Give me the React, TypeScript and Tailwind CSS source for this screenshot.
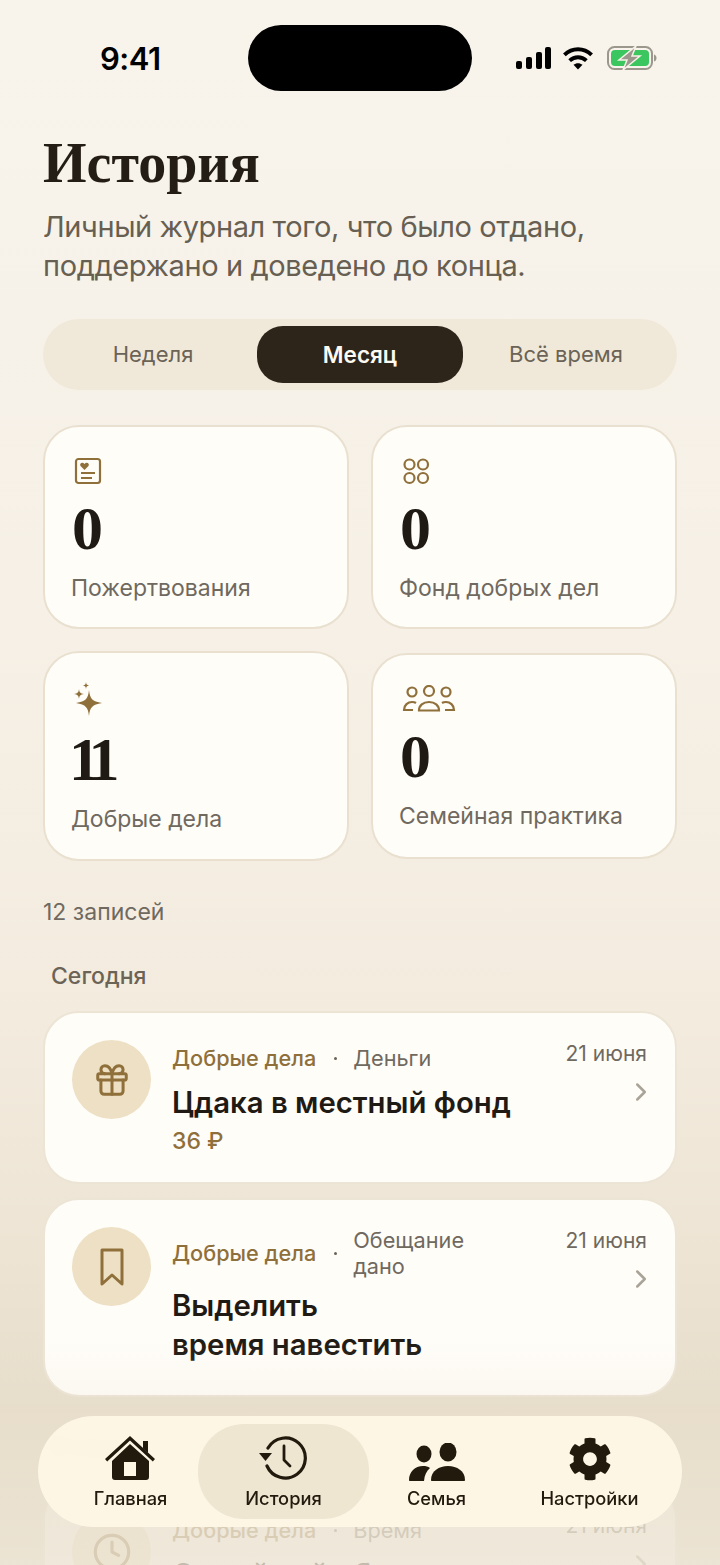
import { ChevronRight, Gift, Clock } from "lucide-react";
import { FaCog } from "react-icons/fa";

const sans = "font-['Inter','Noto_Sans',sans-serif]";
const serif = "font-['Liberation_Serif',serif]";

function StatusBar() {
  return (
    <div className="flex h-[91px] items-end">
      <div className="flex h-[66px] w-[248px] items-center pl-[100px]">
        <span className="text-[31px] font-semibold leading-none tracking-[-0.5px] text-black">9:41</span>
      </div>
      <div className="h-[66px] w-[224px] rounded-full bg-black" />
      <div className="flex h-[66px] items-center gap-[10px] pl-[44px]">
        <svg width="36" height="22" viewBox="0 0 36 22" fill="black">
          <rect x="0" y="14" width="6" height="8" rx="2" />
          <rect x="10" y="10" width="6" height="12" rx="2" />
          <rect x="20" y="5" width="6" height="17" rx="2" />
          <rect x="29" y="0" width="6" height="22" rx="2" />
        </svg>
        <svg width="32" height="23" viewBox="0 0 30 22" fill="none" stroke="black" strokeWidth="3.800">
          <path d="M2 7.500C9.500 .5 20.500 .5 28 7.500" />
          <path d="M7 13c4.700-4.300 11.300-4.300 16 0" />
          <path d="M15 21.500l-4.300-4.500c2.500-2 6.100-2 8.600 0z" fill="black" stroke="none" />
        </svg>
        <svg className="ml-[3px]" width="50" height="24" viewBox="0 0 50 24" fill="none">
          <rect x="1" y="1" width="44" height="22" rx="6.500" stroke="#9b978d" strokeWidth="2" />
          <rect x="4" y="4" width="38" height="16" rx="4" fill="#3cc65f" />
          <path d="M47 8.500c1.800.5 2.500 2 2.500 3.500s-.7 3-2.500 3.500z" fill="#9b978d" />
          <path d="M29 0L12 14h8l-4 10 17-14h-8z" fill="#9b978d" stroke="#f7f1e7" strokeWidth="1.500" />
        </svg>
      </div>
    </div>
  );
}

function Segment() {
  return (
    <div className="mt-[34px] grid h-[71px] grid-cols-[214px_206px_214px] items-center rounded-[36px] bg-[#f0e9da] text-center text-[22px] text-[#6b6356]">
      <span className="pl-[6px]">Неделя</span>
      <span className="flex h-[57px] items-center justify-center rounded-[26px] bg-[#2d241a] text-[22.500px] font-semibold text-[#fdfaf3]">Месяц</span>
      <span className="pr-[8px]">Всё время</span>
    </div>
  );
}

function StatCard({ icon, value, label, box, iconBox, numberStyle = "ml-[1px]" }: { icon: React.ReactNode; value: string; label: string; box: string; iconBox: string; numberStyle?: string }) {
  return (
    <div className={`flex flex-col rounded-[36px] border-2 border-[#e9e0d0] bg-[#fffdf8] pl-[26px] ${box}`}>
      <div className={`flex items-center pl-[3px] ${iconBox}`}>{icon}</div>
      <div className={`${serif} mt-[14px] text-[62px] font-bold leading-[58px] text-[#1f1a14] ${numberStyle}`}>{value}</div>
      <div className="mt-[16px] text-[23px] leading-[30px] text-[#6f695f]">{label}</div>
    </div>
  );
}

function RecordCard({ icon, kind, title, amount }: { icon: React.ReactNode; kind: React.ReactNode; title: React.ReactNode; amount?: string }) {
  return (
    <div className="flex rounded-[36px] border-2 border-[#ece4d5] bg-[#fffdf8] pb-[31px] pl-[27px] pr-[28px] pt-[27px]">
      <div className="flex h-[79px] w-[79px] shrink-0 items-center justify-center rounded-full bg-[#eee0c5] text-[#8f6f3a]">{icon}</div>
      <div className="ml-[21px] min-w-0 flex-1">
        <div className="flex min-h-[36px] items-center text-[21.700px] leading-[26px]">
          <span className="font-medium text-[#8f6f3a]">Добрые дела</span>
          <span className="ml-[18px] mr-[16px] h-[3px] w-[3px] rounded-full bg-[#6b6356]" />
          <span className="w-[125px] text-[#6f695f]">{kind}</span>
        </div>
        <div className="mt-[7px] text-[29.300px] font-semibold leading-[39px] text-[#1f1a14]">{title}</div>
        {amount && <div className="-mb-[5px] mt-[4px] text-[23px] font-medium leading-[30px] text-[#8f6f3a]">{amount}</div>}
      </div>
      <div className="flex w-[90px] flex-col items-end pt-[1px]">
        <span className="whitespace-nowrap text-[21px] leading-[26px] text-[#6f695f]">21 июня</span>
        <ChevronRight className="-mr-[9px] mt-[10px] text-[#a9a398]" size={30} strokeWidth={2} />
      </div>
    </div>
  );
}

function HomeIcon() {
  return (
    <svg className="-ml-[2px]" width="50" height="45" viewBox="0 0 50 45" fill="#231a0e">
      <path d="M38 5h5v12l-5-4.500z" />
      <path d="M25 0L50 23l-2.200 2.400L25 4.500 2.200 25.400 0 23z" />
      <path fillRule="evenodd" d="M25 8l19 17V41a3 3 0 0 1-3 3H10a3 3 0 0 1-3-3V25zM19 26v14h12V26z" />
    </svg>
  );
}

function HistoryIcon() {
  return (
    <svg width="50" height="46" viewBox="0 0 50 46" fill="none" stroke="#231a0e" strokeWidth="3.200" strokeLinecap="round" strokeLinejoin="round">
      <path d="M9 13A20 20 0 1 1 8 31" />
      <path d="M25 11V25l6 6" strokeWidth="2.800" />
      <path d="M0 18h13l-6.500 8z" fill="#231a0e" stroke="none" />
    </svg>
  );
}

function FamilyIcon() {
  return (
    <svg width="56" height="38" viewBox="0 0 56 38" fill="#231a0e">
      <ellipse cx="15" cy="11" rx="7.500" ry="8.500" />
      <ellipse cx="39" cy="9" rx="8.500" ry="9.500" />
      <path d="M0 37c0-8 6-14 14-14 3 0 5 .6 7 2-3.500 3-5.500 7-6 13H1c-.6 0-1-.4-1-1z" />
      <path d="M22 37c0-9 8-14 17-14s17 5 17 14c0 .6-.5 1-1 1H23c-.6 0-1-.4-1-1z" />
    </svg>
  );
}

function NavItem({ icon, label }: { icon: React.ReactNode; label: string }) {
  return (
    <div className="flex flex-col items-center">
      <div className="flex h-[47px] items-end">{icon}</div>
      <span className="mt-[5px] whitespace-nowrap">{label}</span>
    </div>
  );
}

function BottomNav() {
  return (
    <div className="absolute left-[38px] top-[1416px] grid h-[111px] w-[644px] grid-cols-[153px_153px_153px_153px] items-center rounded-[56px] bg-[#fef7e6]/95 pl-[16px] text-center text-[18.300px] font-medium leading-[24px] text-[#231a0e] backdrop-blur-[6px]">
      <NavItem icon={<HomeIcon />} label="Главная" />
      <div className="-mx-[9px] flex h-[95px] items-center justify-center rounded-[46px] bg-[#efe6d2]">
        <NavItem icon={<HistoryIcon />} label="История" />
      </div>
      <NavItem icon={<FamilyIcon />} label="Семья" />
      <NavItem icon={<FaCog size={44} />} label="Настройки" />
    </div>
  );
}

export default function App() {
  return (
    <div className={`${sans} relative h-[1565px] w-[720px] overflow-hidden bg-[linear-gradient(to_bottom,#f8f4ec_0%,#f6f0e6_40%,#f3ebde_65%,#ede4d4_80%,#e7decc_89%,#ebe3d2_100%)]`}>
      <StatusBar />
      <div className="px-[43px]">
        <h1 className={`${serif} mt-[38px] text-[56px] font-bold leading-[68px] text-[#231d16]`}>История</h1>
        <p className="mt-[10px] text-[29px] leading-[39px] tracking-[-0.4px] text-[#675f52]">
          Личный журнал того, что было отдано,
          <br />
          поддержано и доведено до конца.
        </p>
        <Segment />
        <div className="mt-[35px] grid grid-cols-2 items-center gap-x-[22px] gap-y-[22px]">
          <StatCard
            box="h-[204px] pt-[30px]"
            iconBox="h-[28px]"
            value="0"
            label="Пожертвования"
            icon={
              <svg width="28" height="28" viewBox="0 0 28 28" fill="none" stroke="#8f6f3a" strokeWidth="2.200">
                <rect x="2" y="2" width="24" height="24" rx="2.500" />
                <path d="M7 16h14M7 21h11" />
                <path d="M10.500 13l-4-4c-1.500-2.500 2-4.500 4-2 2-2.500 5.500-.5 4 2z" fill="#8f6f3a" stroke="none" />
              </svg>
            }
          />
          <StatCard
            box="h-[204px] pt-[30px]"
            iconBox="h-[28px]"
            value="0"
            label="Фонд добрых дел"
            icon={
              <svg width="28" height="28" viewBox="0 0 28 28" fill="none" stroke="#8f6f3a" strokeWidth="2.200">
                <circle cx="7.500" cy="7.500" r="5" />
                <circle cx="21" cy="7.500" r="5" />
                <circle cx="7.500" cy="21" r="5" />
                <circle cx="21" cy="21" r="5" />
              </svg>
            }
          />
          <StatCard
            box="h-[210px] pt-[29px]"
            iconBox="h-[34px]"
            numberStyle="-ml-[2px] tracking-[-8px]"
            value="11"
            label="Добрые дела"
            icon={
              <svg width="28" height="34" viewBox="0 0 28 34" fill="#8f6f3a">
                <path d="M15 8c1 8.500 3 11.500 13 13-10 1.500-12 4.500-13 13-1-8.500-3-11.500-13-13 10-1.500 12-4.500 13-13z" />
                <path d="M5 7c.5 3.500 1.200 4.300 5 5-3.800.7-4.500 1.500-5 5-.5-3.500-1.200-4.300-5-5 3.800-.7 4.500-1.500 5-5z" />
                <path d="M12 0c.3 2.500.7 3 3 3.500-2.300.5-2.700 1-3 3.500-.3-2.500-.7-3-3-3.500 2.300-.5 2.700-1 3-3.500z" />
              </svg>
            }
          />
          <StatCard
            box="h-[206px] pt-[30px]"
            iconBox="h-[28px]"
            value="0"
            label="Семейная практика"
            icon={
              <svg width="54" height="28" viewBox="0 0 54 28" fill="none" stroke="#8f6f3a" strokeWidth="2.200">
                <circle cx="10" cy="7" r="4.500" />
                <circle cx="27" cy="6" r="5" />
                <circle cx="44" cy="7" r="4.500" />
                <path d="M14 18c-1-.7-2.500-1-4-1-4 0-8 3-8 8h9" />
                <path d="M17 25.500c0-5 4-8.500 10-8.500s10 3.500 10 8.500z" />
                <path d="M40 18c1-.7 2.500-1 4-1 4 0 8 3 8 8h-9" />
              </svg>
            }
          />
        </div>
        <div className="mt-[37px] text-[23px] leading-[28px] text-[#6f695f]">12 записей</div>
        <div className="mt-[36px] pl-[8px] text-[23px] font-medium leading-[28px] text-[#6b6356]">Сегодня</div>
        <div className="mt-[21px] flex flex-col gap-[14px]">
          <RecordCard icon={<Gift size={38} strokeWidth={1.900} />} kind="Деньги" title="Цдака в местный фонд" amount="36 ₽" />
          <RecordCard
            icon={
              <svg width="24" height="38" viewBox="0 0 24 38" fill="none" stroke="currentColor" strokeWidth="3" strokeLinejoin="round">
                <path d="M2 2h20v34l-10-9-10 9z" />
              </svg>
            }
            kind="Обещание дано"
            title={
              <>
                Выделить
                <br />
                время навестить
              </>
            }
          />
        </div>
        <div className="mt-[36px] pl-[8px] text-[23px] font-medium leading-[28px] text-[#6b6356]">Вчера</div>
        <div className="mt-[22px]">
          <RecordCard icon={<Clock size={40} strokeWidth={1.900} />} kind="Время" title="Семейный обед" />
        </div>
      </div>
      <div className="absolute bottom-0 left-0 h-[225px] w-full bg-[linear-gradient(to_bottom,rgba(231,221,202,0)_0%,rgba(231,221,202,0.15)_24%,rgba(231,221,202,0.85)_30%,rgba(236,228,212,0.8)_100%)]" />
      <BottomNav />
    </div>
  );
}
